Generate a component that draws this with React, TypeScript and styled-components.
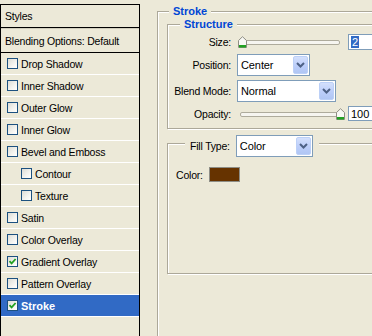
import React from 'react';
import styled, { createGlobalStyle } from 'styled-components';

const GlobalStyle = createGlobalStyle`
html, body {
  margin: 0;
  padding: 0;
  background: #ece9d8;
}
body {
  font-family: "Liberation Sans", Arial, sans-serif;
  font-size: 10.5px;
  letter-spacing: -0.2px;
  color: #000;
}
`

const Dialog = styled.div`
width: 372px;
height: 336px;
overflow: hidden;
display: flex;
align-items: flex-start;
background: #ece9d8;
`

const StyleList = styled.div`
flex: 0 0 140px;
box-sizing: border-box;
height: 400px;
margin-top: 4px;
border-left: 1px solid #000;
border-right: 1px solid #000;
`

const ListHeader = styled.div<{ $top?: boolean }>`
height: ${p => p.$top ? '22px' : '23px'};
display: flex;
align-items: center;
padding-left: 4px;
border-top: 1px solid ${p => p.$top ? '#000' : '#cfccbc'};
border-bottom: 1px solid #000;
`

const StyleRow = styled.div<{ $indent?: boolean; $selected?: boolean }>`
height: 21px;
display: flex;
align-items: center;
gap: 3px;
padding-left: ${p => p.$indent ? '20px' : '6px'};
border-bottom: 1px solid #fff;
background: ${p => p.$selected ? '#316ac5' : 'transparent'};
color: ${p => p.$selected ? '#fff' : '#000'};
font-weight: ${p => p.$selected ? 'bold' : 'normal'};
font-size: ${p => p.$selected ? '11px' : '10.5px'};
letter-spacing: ${p => p.$selected ? '0' : '-0.2px'};
`

const CheckBox = styled.span`
flex: 0 0 11px;
height: 11px;
box-sizing: border-box;
border: 1px solid #1c5180;
background: linear-gradient(135deg, #dcdcd5 0%, #f4f4f0 60%, #fff 100%);
display: flex;
align-items: center;
justify-content: center;
`

const SettingsArea = styled.div`
flex: 0 0 auto;
margin-left: 17px;
`

const Group = styled.fieldset`
margin: 0;
min-width: 0;
box-sizing: border-box;
border: 1px solid #aca899;
box-shadow: inset 1px 1px 0 #fff, 1px 1px 0 #fff;
`

const StrokeGroup = styled(Group)`
margin-top: 5px;
width: 240px;
height: 400px;
padding: 0 9px;
`

const StructureGroup = styled(Group)`
padding: 3px 0 7px;
`

const FillGroup = styled(Group)`
margin-top: 1px;
height: 144px;
padding: 10px 8px 0;
`

const GroupTitle = styled.legend<{ $indent: number }>`
margin-left: ${p => p.$indent}px;
padding: 0 4px;
background: #ece9d8;
color: #0046d5;
font-weight: bold;
font-size: 11px;
letter-spacing: 0;
line-height: 13px;
`

const FillLegend = styled.legend`
margin-left: 9px;
padding: 5px 6px 0 5px;
background: #ece9d8;
display: flex;
align-items: center;
gap: 6px;
`

const FieldGrid = styled.div`
display: grid;
grid-template-columns: 63px auto;
column-gap: 6px;
row-gap: 4px;
align-items: center;
`

const FieldLabel = styled.span`
text-align: right;
white-space: nowrap;
`

const ControlLine = styled.div`
display: flex;
align-items: center;
gap: 3px;
`

const ComboBox = styled.div<{ $width: number }>`
width: ${p => p.$width}px;
height: 22px;
box-sizing: border-box;
border: 1px solid #7f9db9;
background: #fff;
display: flex;
align-items: center;
padding: 1px 1px 1px 3px;
`

const ComboText = styled.span`
flex: 1;
font-size: 11px;
letter-spacing: -0.1px;
`

const ComboButton = styled.span`
flex: 0 0 15px;
align-self: stretch;
box-sizing: border-box;
border: 1px solid #bcd0f7;
border-radius: 2px;
background: linear-gradient(180deg, #d4e0fc 0%, #bccefa 55%, #b0c6f4 100%);
display: flex;
align-items: center;
justify-content: center;
`

const TextBox = styled.div<{ $height: number }>`
width: 30px;
height: ${p => p.$height}px;
box-sizing: border-box;
border: 1px solid #7f9db9;
background: #fff;
display: flex;
align-items: center;
padding-left: 2px;
font-size: 11px;
letter-spacing: 0;
`

const Selected = styled.span`
background: #316ac5;
color: #fff;
padding: 0 1px;
`

const SliderBody = styled.div`
position: relative;
width: 108px;
height: 12px;
display: flex;
align-items: center;
`

const Track = styled.div`
flex: 1;
height: 3px;
margin: 1px 5px 0 3px;
border: 1px solid #aeab9c;
border-radius: 2px;
background: #f6f5f0;
`

const Thumb = styled.svg`
position: absolute;
top: 0;
`

const ColorLine = styled.div`
display: flex;
align-items: center;
gap: 6px;
`

const Swatch = styled.div<{ $color: string }>`
width: 31px;
height: 15px;
box-sizing: border-box;
border: 1px solid #8d8d86;
background: ${p => p.$color};
`

const CheckMark = () => (
    <svg width="9" height="9" viewBox="0 0 9 9">
        <path d="M1.5 4.2 L3.6 6.4 L7.6 2" fill="none" stroke="#21a121" strokeWidth="1.8" />
    </svg>
)

const Chevron = () => (
    <svg width="9" height="6" viewBox="0 0 9 6">
        <path d="M1 1 L4.5 4.5 L8 1" fill="none" stroke="#4d6185" strokeWidth="2" />
    </svg>
)

const Select = ({ value, width }: { value: string; width: number }) => (
    <ComboBox $width={width}>
        <ComboText>{value}</ComboText>
        <ComboButton><Chevron /></ComboButton>
    </ComboBox>
)

const Slider = ({ value, max }: { value: number; max: number }) => (
    <SliderBody>
        <Track />
        <Thumb width="9" height="12" viewBox="0 0 9 12" style={{ left: `${Math.round((value / max) * 99)}px` }}>
            <path d="M0.5 4.5 L4.5 0.7 L8.5 4.5 V11.5 H0.5 Z" fill="#f8f8f4" stroke="#8f8e84" />
            <rect x="1" y="9" width="7" height="2.5" fill="#21a121" />
        </Thumb>
    </SliderBody>
)

const styleItems = [
    { name: 'Drop Shadow' },
    { name: 'Inner Shadow' },
    { name: 'Outer Glow' },
    { name: 'Inner Glow' },
    { name: 'Bevel and Emboss' },
    { name: 'Contour', indent: true },
    { name: 'Texture', indent: true },
    { name: 'Satin' },
    { name: 'Color Overlay' },
    { name: 'Gradient Overlay', checked: true },
    { name: 'Pattern Overlay' },
    { name: 'Stroke', checked: true, selected: true },
]

export default function App() {
    return (
        <>
            <GlobalStyle />
            <Dialog>
                <StyleList>
                    <ListHeader $top>Styles</ListHeader>
                    <ListHeader>Blending Options: Default</ListHeader>
                    {styleItems.map((item) => (
                        <StyleRow key={item.name} $indent={item.indent} $selected={item.selected}>
                            <CheckBox>{item.checked && <CheckMark />}</CheckBox>
                            {item.name}
                        </StyleRow>
                    ))}
                </StyleList>
                <SettingsArea>
                    <StrokeGroup>
                        <GroupTitle $indent={2}>Stroke</GroupTitle>
                        <StructureGroup>
                            <GroupTitle $indent={12}>Structure</GroupTitle>
                            <FieldGrid>
                                <FieldLabel>Size:</FieldLabel>
                                <ControlLine>
                                    <Slider value={2} max={250} />
                                    <TextBox $height={16}><Selected>2</Selected></TextBox>
                                </ControlLine>
                                <FieldLabel>Position:</FieldLabel>
                                <Select value="Center" width={73} />
                                <FieldLabel>Blend Mode:</FieldLabel>
                                <Select value="Normal" width={99} />
                                <FieldLabel>Opacity:</FieldLabel>
                                <ControlLine>
                                    <Slider value={100} max={100} />
                                    <TextBox $height={15}>100</TextBox>
                                </ControlLine>
                            </FieldGrid>
                        </StructureGroup>
                        <FillGroup>
                            <FillLegend>
                                Fill Type:
                                <Select value="Color" width={77} />
                            </FillLegend>
                            <ColorLine>
                                Color:
                                <Swatch $color="#663300" />
                            </ColorLine>
                        </FillGroup>
                    </StrokeGroup>
                </SettingsArea>
            </Dialog>
        </>
    )
}
